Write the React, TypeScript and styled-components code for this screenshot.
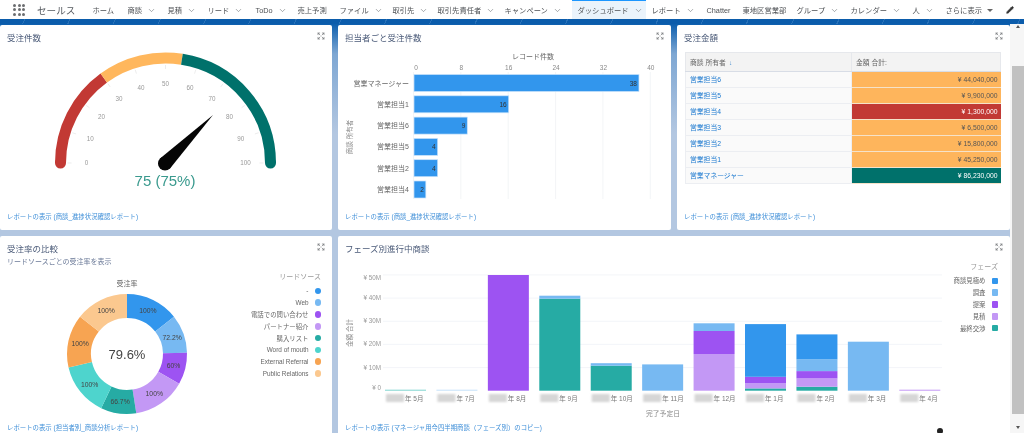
import React from "react";
import styled, { createGlobalStyle } from "styled-components";
import { ChevronDown, Expand, Pencil } from "lucide-react";

const FONT = `"Liberation Sans", "Noto Sans CJK JP", sans-serif`;

const Global = createGlobalStyle`
  html, body { margin: 0; padding: 0; background: #fff; overflow: hidden; }
  * { box-sizing: border-box; }
  body { font-family: ${FONT}; }
`;

const Page = styled.div`
  width: 1024px; height: 433px; display: flex; flex-direction: column; overflow: hidden;
  filter: blur(0.45px);
`;
const Nav = styled.nav`
  height: 19px; flex: none; display: flex; align-items: center; background: #fff; padding-left: 13px; color: #444;
`;
const Waffle = styled.div`
  display: grid; grid-template-columns: repeat(3, 3px); grid-auto-rows: 3px; gap: 1.5px; margin-right: 12px;
  i { background: #6b6d70; border-radius: 50%; }
`;
const Brand = styled.div`
  font-size: 9.6px; color: #54585e; width: 49.5px; white-space: nowrap;
`;
const NavItem = styled.div<{ $active?: boolean; $w: number }>`
  height: 19px; width: ${p => p.$w}px; flex: none; display: flex; align-items: center; gap: 5px; padding-left: 6px;
  font-size: 7.3px; white-space: nowrap; color: #4d5054;
  background: ${p => (p.$active ? "#eaf3fb" : "transparent")};
  border-top: 1px solid ${p => (p.$active ? "#1b96ff" : "transparent")};
  svg { flex: none; color: #6f7377; }
`;
const Caret = styled.span`
  width: 0; height: 0; border-left: 3px solid transparent; border-right: 3px solid transparent; border-top: 3.5px solid #666;
`;
const EditIcon = styled(Pencil)`
  margin-left: 13px; flex: none;
`;
const Strip = styled.div`
  height: 5px; flex: none;
  background: repeating-linear-gradient(115deg, #0b5cab 0 22px, #2a72b8 22px 23px, #0b5cab 23px 41px);
`;
const Main = styled.main`
  flex: 1; min-height: 0; display: flex; overflow: hidden;
  background: linear-gradient(#0d5fae 0, #7ea7d3 30px, #b3c7e1 110px, #b3c7e1 100%);
`;
const Board = styled.div`
  width: 1010px; flex: none; display: grid; padding: 1px 0 0 0;
  grid-template-columns: 332px 333px 333px; grid-template-rows: 205px 205px; gap: 6px;
`;
const Card = styled.section<{ $span?: number }>`
  background: #fff; border-radius: 2px; display: flex; flex-direction: column; position: relative; min-width: 0;
  grid-column: span ${p => p.$span ?? 1};
`;
const Head = styled.header`
  display: flex; justify-content: space-between; padding: 8px 7px 0 7px; height: 21px; flex: none;
  svg { color: #6d7073; margin-top: -1px; flex: none; }
`;
const TallHead = styled(Head)`
  height: 31px;
`;
const Title = styled.h2`
  margin: 0; font-size: 8.5px; line-height: 11px; font-weight: 400; color: #4a5a78; white-space: nowrap;
`;
const Sub = styled.div`
  font-size: 7px; line-height: 11px; margin-top: 1px; color: #6b7a98; white-space: nowrap;
`;
const Body = styled.div`
  flex: 1; min-height: 0; display: flex; justify-content: space-between; align-items: flex-start;
`;
const Chart = styled.svg`
  display: block; flex: none;
`;
const Foot = styled.footer`
  height: 18px; flex: none; padding: 0 7px; font-size: 6.4px; line-height: 10px; color: #3f8fd8; white-space: nowrap;
`;
const Legend = styled.div<{ $pad: number; $right: number }>`
  display: flex; flex-direction: column; align-items: flex-end; padding: ${p => p.$pad}px ${p => p.$right}px 0 0; flex: none;
`;
const LegendHead = styled.div`
  font-size: 7px; line-height: 11px; color: #999; margin-bottom: 3px;
`;
const LegendRow = styled.div`
  height: 11.8px; display: flex; align-items: center; gap: 6px; font-size: 6.4px; color: #666; white-space: nowrap;
`;
const Swatch = styled.i<{ $c: string; $square?: boolean }>`
  width: 6.5px; height: 6.5px; background: ${p => p.$c}; border-radius: ${p => (p.$square ? "1px" : "50%")};
`;
const Tbl = styled.table`
  margin: 6px 0 0 8px; width: 316px; border-collapse: collapse; table-layout: fixed; font-size: 6.8px;
`;
const Th = styled.th<{ $w?: number }>`
  height: 19px; padding: 0 4px; font-weight: 400; text-align: left; color: #666; background: #f3f3f3;
  border: 1px solid #e6e8ec; border-bottom: 1px solid #d8dde6; width: ${p => (p.$w ? `${p.$w}px` : "auto")};
  small { color: #4a90d0; font-size: 6.5px; margin-left: 3px; }
`;
const Owner = styled.td`
  height: 16px; padding: 0 4px; color: #1a78cf; background: #fafafa; border: 1px solid #eceef2; line-height: 10px;
`;
const Amount = styled.td<{ $bg: string; $light?: boolean }>`
  height: 16px; padding: 0 3px; text-align: right; background: ${p => p.$bg}; color: ${p => (p.$light ? "#fff" : "#555")};
  border-bottom: 1px solid #f5e2c9; white-space: nowrap; line-height: 10px;
`;
const Bar = styled.aside`
  flex: 1; background: #f6f6f6; display: flex; flex-direction: column; align-items: flex-end;
`;
const ArrowUp = styled.div`
  width: 12px; height: 41.5px; display: flex; justify-content: center; padding-top: 1px;
  &::before { content: ""; width: 0; height: 0; border: 2.5px solid transparent; border-top: 0; border-bottom: 3px solid #555; }
`;
const Thumb = styled.div`
  width: 12px; height: 348px; background: #c1c1c1; flex: none;
`;
const ArrowDown = styled.div`
  width: 12px; flex: 1; display: flex; justify-content: center; padding-top: 12px;
  &::before { content: ""; width: 0; height: 0; border: 2.5px solid transparent; border-bottom: 0; border-top: 3px solid #555; }
`;
const Cursor = styled.span`
  position: absolute; left: 599px; top: 192px; width: 6px; height: 6px; border-radius: 50%; background: #222;
`;
const Label = styled.text<{ $size?: number; $c?: string }>`
  font-family: ${FONT}; font-size: ${p => p.$size ?? 7}px; fill: ${p => p.$c ?? "#777"};
`;

const BLUE = "#3296ed", SKY = "#77b9f2", VIOLET = "#9d53f2", LILAC = "#c398f5", TEAL = "#26aba4";

const navItems: [string, boolean, number][] = [
  ["ホーム", false, 35], ["商談", true, 40], ["見積", true, 40], ["リード", true, 48], ["ToDo", true, 42],
  ["売上予測", false, 42], ["ファイル", true, 53], ["取引先", true, 45], ["取引先責任者", true, 67], ["キャンペーン", true, 73],
  ["ダッシュボード", true, 74], ["レポート", true, 55], ["Chatter", false, 36], ["東地区営業部", false, 54], ["グループ", true, 54],
  ["カレンダー", true, 62], ["人", true, 33],
];

const pt = (cx: number, cy: number, r: number, deg: number): [number, number] => [
  cx + r * Math.cos((deg * Math.PI) / 180), cy - r * Math.sin((deg * Math.PI) / 180),
];
const GX = 165.5, GY = 163;
const gaugeAngle = (v: number) => 180 - v * 1.8;
const gaugeArc = (a: number, b: number, r: number) => {
  const [x1, y1] = pt(GX, GY, r, gaugeAngle(a));
  const [x2, y2] = pt(GX, GY, r, gaugeAngle(b));
  return `M${x1} ${y1}A${r} ${r} 0 0 1 ${x2} ${y2}`;
};

function Gauge() {
  const segs: [number, number, string][] = [[0, 30, "#c23934"], [30, 55, "#ffb75d"], [55, 100, "#00716b"]];
  return (
    <Chart width={332} height={166} viewBox="0 46 332 166">
      {segs.map(([a, b, c]) => <path key={a} d={gaugeArc(a, b, 105)} fill="none" stroke={c} strokeWidth={11} />)}
      <circle cx={GX - 105} cy={GY} r={5.5} fill="#c23934" />
      <circle cx={GX + 105} cy={GY} r={5.5} fill="#00716b" />
      {Array.from({ length: 11 }, (_, i) => {
        const v = i * 10, d = gaugeAngle(v);
        const [x1, y1] = pt(GX, GY, 98, d), [x2, y2] = pt(GX, GY, 94, d), [tx, ty] = pt(GX, GY, i === 10 ? 80 : 79, d);
        return (
          <g key={v}>
            <line x1={x1} y1={y1} x2={x2} y2={y2} stroke="#e4e4e4" strokeWidth={0.7} />
            <Label x={tx} y={ty + 2} $size={6.3} $c="#999" textAnchor="middle">{v}</Label>
          </g>
        );
      })}
      <circle cx={165} cy={163.5} r={7} fill="#050505" />
      <polygon points="213,115 170,168.5 160,158.5" fill="#050505" />
      <Label x={165} y={186} $size={15} $c="#3a9a8e" textAnchor="middle">75 (75%)</Label>
    </Chart>
  );
}

function Owners() {
  const rows: [string, number][] = [["営業マネージャー", 38], ["営業担当1", 16], ["営業担当6", 9], ["営業担当5", 4], ["営業担当2", 4], ["営業担当4", 2]];
  const x0 = 414, u = 5.92;
  return (
    <Chart width={333} height={166} viewBox="338 46 333 166">
      <Label x={533} y={59} $size={7} $c="#666" textAnchor="middle">レコード件数</Label>
      {[0, 8, 16, 24, 32, 40].map(t => (
        <g key={t}>
          <line x1={x0 + t * u - 0.5} y1={72} x2={x0 + t * u - 0.5} y2={199} stroke="#eef0f4" strokeWidth={0.7} />
          <Label x={x0 + t * u + (t === 0 ? 2 : 0)} y={70} $size={6.5} $c="#888" textAnchor="middle">{t}</Label>
        </g>
      ))}
      {rows.map(([n, v], i) => {
        const y = 74.5 + i * 21.3;
        return (
          <g key={n}>
            <Label x={409} y={y + 11} $size={7} $c="#666" textAnchor="end">{n}</Label>
            <rect x={x0} y={y} width={v * u} height={17} fill={BLUE} stroke="#c9e3fb" strokeWidth={0.7} />
            <Label x={x0 + v * u - 2} y={y + 11} $size={6.5} $c="#333" textAnchor="end">{v}</Label>
          </g>
        );
      })}
      <Label x={0} y={0} $size={6.5} $c="#888" textAnchor="middle" transform="translate(352 137) rotate(-90)">商談 所有者</Label>
    </Chart>
  );
}

function Donut() {
  const cx = 127, cy = 354, R = 60, r = 36;
  const data: [string, number, string, string][] = [
    ["100%", 100, BLUE, "-"], ["72.2%", 72.2, SKY, "Web"], ["60%", 60, VIOLET, "電話での問い合わせ"], ["100%", 100, LILAC, "パートナー紹介"],
    ["66.7%", 66.7, TEAL, "購入リスト"], ["100%", 100, "#4ed4cd", "Word of mouth"], ["100%", 100, "#f7a452", "External Referral"], ["100%", 100, "#fbc88f", "Public Relations"],
  ];
  const total = data.reduce((s, d) => s + d[1], 0);
  let acc = 0;
  return (
    <>
      <Chart width={230} height={156} viewBox="0 267 230 156">
        <Label x={cx} y={286} $size={7} $c="#666" textAnchor="middle">受注率</Label>
        {data.map(([l, v, c], i) => {
          const a = 90 - (acc / total) * 360;
          const b = 90 - ((acc + v) / total) * 360;
          const m = (a + b) / 2;
          acc += v;
          const p1 = pt(cx, cy, R, a), p2 = pt(cx, cy, R, b), p3 = pt(cx, cy, r, b), p4 = pt(cx, cy, r, a), t = pt(cx, cy, 48, m);
          return (
            <g key={i}>
              <path d={`M${p1}A${R} ${R} 0 0 1 ${p2}L${p3}A${r} ${r} 0 0 0 ${p4}Z`} fill={c} />
              <Label x={t[0]} y={t[1] + 2.5} $size={6.8} $c="#444" textAnchor="middle">{l}</Label>
            </g>
          );
        })}
        <Label x={cx} y={359} $size={13} $c="#444" textAnchor="middle">79.6%</Label>
      </Chart>
      <Legend $pad={4} $right={11}>
        <LegendHead>リードソース</LegendHead>
        {data.map(d => <LegendRow key={d[3]}>{d[3]}<Swatch $c={d[2]} /></LegendRow>)}
      </Legend>
    </>
  );
}

function Phases() {
  const bars: [string, [string, number][]][] = [
    ["5月", [["#7fd5cf", 1]]],
    ["7月", [["#c5e1fa", 1]]],
    ["8月", [[VIOLET, 115.7]]],
    ["9月", [[TEAL, 92], [SKY, 3]]],
    ["10月", [[TEAL, 25], [SKY, 2.5]]],
    ["11月", [[SKY, 26.3]]],
    ["12月", [[LILAC, 36.7], [VIOLET, 23], [SKY, 7.7]]],
    ["1月", [[TEAL, 2.3], [LILAC, 5.3], [VIOLET, 6.3], [BLUE, 52.7]]],
    ["2月", [[TEAL, 4], [LILAC, 8.3], [VIOLET, 7.3], [SKY, 11.7], [BLUE, 25]]],
    ["3月", [[SKY, 49]]],
    ["4月", [[LILAC, 1]]],
  ];
  const base = 390.7;
  return (
    <Chart width={610} height={166} viewBox="338 257 610 166">
      <defs>
        <filter id="smudge" x="-30%" y="-50%" width="160%" height="200%"><feGaussianBlur stdDeviation="1.3" /></filter>
      </defs>
      {[0, 10, 20, 30, 40, 50].map(m => {
        const y = base - m * 2.315;
        const nudge = m === 50 ? 5 : m === 0 ? -1 : 2;
        return (
          <g key={m}>
            {m > 0 && <line x1={383} x2={942} y1={y} y2={y} stroke="#f0f2f7" strokeWidth={0.8} />}
            <Label x={381} y={y + nudge} $size={6.3} $c="#999" textAnchor="end">{m === 0 ? "¥ 0" : `¥ ${m}M`}</Label>
          </g>
        );
      })}
      {bars.map(([name, stack], i) => {
        const x = 385 + i * 51.43;
        let y = base;
        return (
          <g key={name}>
            {stack.map(([c, h], j) => {
              y -= h;
              return <rect key={j} x={x} y={y} width={41} height={h} fill={c} />;
            })}
            <rect x={x + 1} y={394} width={18} height={8} fill="#d6d6d6" filter="url(#smudge)" />
            <Label x={x + 20} y={401} $size={6.5} $c="#777">{`年 ${name}`}</Label>
          </g>
        );
      })}
      <Label x={663} y={416} $size={6.8} $c="#888" textAnchor="middle">完了予定日</Label>
      <Label x={0} y={0} $size={6.5} $c="#888" textAnchor="middle" transform="translate(352 333) rotate(-90)">金額 合計</Label>
    </Chart>
  );
}

const amounts: [string, string, string, boolean][] = [
  ["営業担当6", "¥ 44,040,000", "#feb55c", false],
  ["営業担当5", "¥ 9,900,000", "#feb55c", false],
  ["営業担当4", "¥ 1,300,000", "#c23934", true],
  ["営業担当3", "¥ 6,500,000", "#feb55c", false],
  ["営業担当2", "¥ 15,800,000", "#feb55c", false],
  ["営業担当1", "¥ 45,250,000", "#feb55c", false],
  ["営業マネージャー", "¥ 86,230,000", "#00716b", true],
];
const phases: [string, string][] = [["商談見極め", BLUE], ["調査", SKY], ["提案", VIOLET], ["見積", LILAC], ["最終交渉", TEAL]];

const Max = () => <Expand size={8} strokeWidth={2} />;

export default function App() {
  return (
    <Page>
      <Global />
      <Nav>
        <Waffle>{Array.from({ length: 9 }, (_, i) => <i key={i} />)}</Waffle>
        <Brand>セールス</Brand>
        {navItems.map(([l, chev, w]) => (
          <NavItem key={l} $w={w} $active={l === "ダッシュボード"}>
            {l}{chev && <ChevronDown size={9} strokeWidth={1.6} />}
          </NavItem>
        ))}
        <NavItem $w={53}>さらに表示<Caret /></NavItem>
        <EditIcon size={8} fill="#333" color="#333" />
      </Nav>
      <Strip />
      <Main>
        <Board>
          <Card>
            <Head><Title>受注件数</Title><Max /></Head>
            <Body><Gauge /></Body>
            <Foot>レポートの表示 (商談_進捗状況確認レポート)</Foot>
          </Card>
          <Card>
            <Head><Title>担当者ごと受注件数</Title><Max /></Head>
            <Body><Owners /></Body>
            <Foot>レポートの表示 (商談_進捗状況確認レポート)</Foot>
          </Card>
          <Card>
            <Head><Title>受注金額</Title><Max /></Head>
            <Body>
              <Tbl>
                <thead>
                  <tr><Th $w={166}>商談 所有者<small>↓</small></Th><Th>金額 合計:</Th></tr>
                </thead>
                <tbody>
                  {amounts.map(([n, a, c, light]) => (
                    <tr key={n}><Owner>{n}</Owner><Amount $bg={c} $light={light}>{a}</Amount></tr>
                  ))}
                </tbody>
              </Tbl>
            </Body>
            <Foot>レポートの表示 (商談_進捗状況確認レポート)</Foot>
          </Card>
          <Card>
            <TallHead>
              <div><Title>受注率の比較</Title><Sub>リードソースごとの受注率を表示</Sub></div>
              <Max />
            </TallHead>
            <Body><Donut /></Body>
            <Foot>レポートの表示 (担当者別_商談分析レポート)</Foot>
          </Card>
          <Card $span={2}>
            <Head><Title>フェーズ別進行中商談</Title><Max /></Head>
            <Body>
              <Phases />
              <Legend $pad={4} $right={12}>
                <LegendHead>フェーズ</LegendHead>
                {phases.map(([n, c]) => <LegendRow key={n}>{n}<Swatch $c={c} $square /></LegendRow>)}
              </Legend>
            </Body>
            <Foot>レポートの表示 (マネージャ用今四半期商談（フェーズ別）のコピー)</Foot>
            <Cursor />
          </Card>
        </Board>
        <Bar>
          <ArrowUp />
          <Thumb />
          <ArrowDown />
        </Bar>
      </Main>
    </Page>
  );
}
